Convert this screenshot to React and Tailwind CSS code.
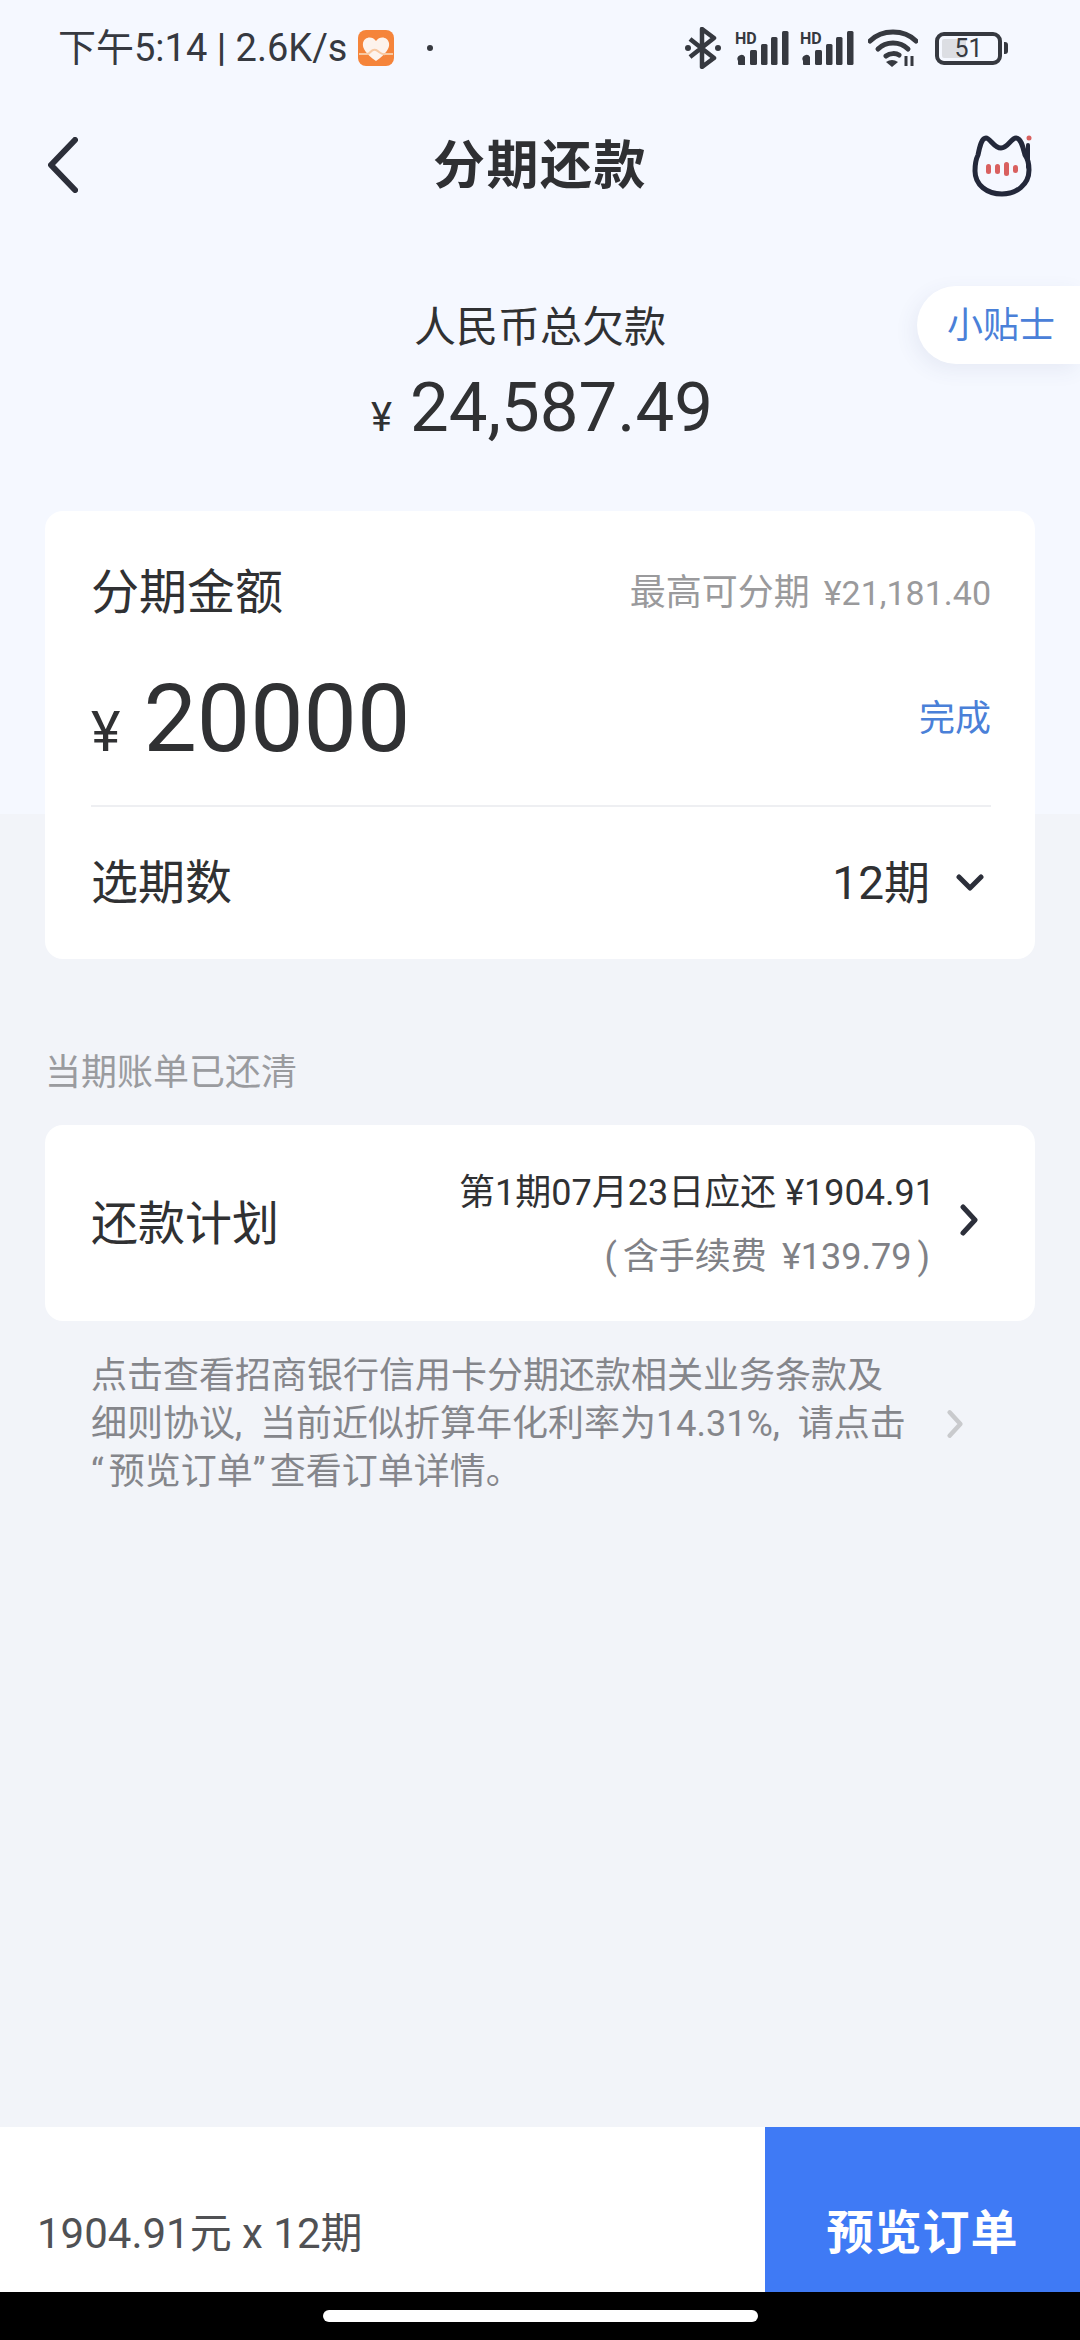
/**
 * App.jsx
 *
 * Installment repayment page for a credit card bill.
 */

import React from 'react';

const FONT = "font-['Roboto','Noto_Sans_CJK_SC',sans-serif]";

const Chevron = ({ className, color = '#2c2f3a', width = 5 }) => (
  <svg viewBox="0 0 20 32" className={className} fill="none">
    <path d="M4 3 L16 16 L4 29" stroke={color} strokeWidth={width} strokeLinecap="round" strokeLinejoin="round" />
  </svg>
);

const Signal = () => (
  <div className="relative w-[54px] h-[34px]">
    <span className="absolute left-0 top-0 text-[16px] leading-none font-bold text-[#363940]">HD</span>
    <svg viewBox="0 0 54 34" className="w-[54px] h-[34px]" fill="#363940">
      <path d="M3 30 a4 4 0 0 1 7 -4 v8 h-6 a1 1 0 0 1 -1 -1z" />
      <rect x="15" y="19" width="7" height="15" rx="1.5" />
      <rect x="26" y="13" width="6.5" height="21" rx="1.5" />
      <rect x="36" y="6" width="6.5" height="28" rx="1.5" />
      <rect x="47" y="0" width="6.5" height="34" rx="1.5" />
    </svg>
  </div>
);

const StatusBar = () => (
  <div className="h-[96px] flex items-center justify-between pl-[58px] pr-[72px] text-[#363940]">
    <div className="flex items-center">
      <span className="text-[38px] leading-none">
        下午5:14 <span className="font-medium">|</span> 2.6K/s
      </span>
      <svg viewBox="0 0 36 36" className="w-[36px] h-[36px] ml-[11px]">
        <rect width="36" height="36" rx="8" fill="#f5843a" />
        <path d="M18 31 C8 24 4 18 5 13 C6 7 14 5 18 11 C22 5 30 7 31 13 C32 18 28 24 18 31Z" fill="#fdf3ec" />
        <path d="M1 24 H9 C13 24 13 18 18 20 C22 22 23 25 27 24 H35" fill="none" stroke="#f8c9a2" strokeWidth="2" />
      </svg>
      <span className="w-[6px] h-[6px] rounded-full bg-[#363940] ml-[33px]" />
    </div>
    <div className="flex items-center">
      <svg viewBox="0 0 38 42" className="w-[38px] h-[42px]" fill="none" stroke="#363940" strokeWidth="4.5" strokeLinejoin="round">
        <path d="M6 12 L30 31 L18 40 V2 L30 11 L6 30" />
        <circle cx="4" cy="21" r="3" fill="#363940" stroke="none" />
        <circle cx="34" cy="21" r="3" fill="#363940" stroke="none" />
      </svg>
      <div className="ml-[13px]"><Signal /></div>
      <div className="ml-[11px]"><Signal /></div>
      <svg viewBox="0 0 50 38" className="w-[50px] h-[38px] ml-[14px]" fill="none" stroke="#363940" strokeWidth="5" strokeLinecap="round">
        <path d="M2 12 C14 0 36 0 48 12" />
        <path d="M10 20 C18 12 32 12 40 20" />
        <path d="M18 27 C22 24 28 24 31 26" />
        <path d="M24 38 l-6 -5 q6 -4 12 0z" fill="#363940" stroke="none" />
        <path d="M38 37 V27 M44 37 V27" strokeWidth="3" strokeLinecap="butt" />
      </svg>
      <div className="ml-[17px] flex items-center">
        <div className="relative w-[67px] h-[33px] rounded-[9px] border-[4px] border-[#363940] flex items-center p-[3px]">
          <div className="w-[24px] h-full rounded-[2px] bg-[#dcdee3]" />
          <span className="absolute inset-0 flex items-center justify-center text-[25px] leading-none">51</span>
        </div>
        <div className="w-[4px] h-[12px] rounded-r-[3px] bg-[#363940] ml-[2px]" />
      </div>
    </div>
  </div>
);

const NavBar = () => (
  <div className="h-[138px] grid grid-cols-[1fr_auto_1fr] items-center pl-[48px] pr-[48px]">
    <svg viewBox="0 0 30 56" className="w-[30px] h-[56px]" fill="none">
      <path d="M27 3 L3 28 L27 53" stroke="#2c2f3a" strokeWidth="6" strokeLinecap="round" strokeLinejoin="round" />
    </svg>
    <h1 className="text-[52px] leading-none font-bold text-[#2f3033] tracking-[1.5px] mt-[4px]">分期还款</h1>
    <svg viewBox="0 0 60 62" className="w-[60px] h-[62px] justify-self-end mt-[2px]" fill="none">
      <path
        d="M6 20 C8 10 10 3 14 3 C18 3 22 13 29 13 C36 13 39 3 44 3 C49 3 51 12 53 20 C56 24 57 30 57 35 C57 50 44 59 30 59 C15 59 3 50 3 36 C3 29 4 24 6 20Z"
        stroke="#23283a"
        strokeWidth="5"
        strokeLinejoin="round"
      />
      <path d="M56 10 V32" stroke="#23283a" strokeWidth="4" strokeLinecap="round" />
      <rect x="14" y="29" width="5" height="10" rx="2.5" fill="#d9605f" />
      <rect x="23" y="29" width="5" height="10" rx="2.5" fill="#d9605f" />
      <rect x="32" y="27" width="5" height="14" rx="2.5" fill="#d9605f" />
      <rect x="41" y="30" width="5" height="8" rx="2.5" fill="#d9605f" />
      <circle cx="57" cy="3" r="2.5" fill="#d9605f" />
    </svg>
  </div>
);

const App = () => (
  <div className={`${FONT} relative w-[1080px] h-[2340px] flex flex-col overflow-hidden bg-[linear-gradient(#f5f8ff_814px,#f2f4f9_814px)]`}>
    <StatusBar />
    <NavBar />

    {/* total owed */}
    <div className="relative flex flex-col items-center pt-[70px]">
      <p className="text-[42px] leading-[48px] text-[#303133]">人民币总欠款</p>
      <p className="flex items-baseline mt-[21px] ml-[4px] leading-none text-[#303133]">
        <span className="text-[40px] mr-[18px]">¥</span>
        <span className="text-[69px]">24,587.49</span>
      </p>
      <div className="absolute right-0 top-[52px] w-[163px] h-[78px] rounded-l-[39px] bg-white shadow-[-4px_6px_20px_rgba(60,80,130,0.08)] flex items-center pl-[30px] pt-[2px] text-[36px] text-[#4a80d8]">
        小贴士
      </div>
    </div>

    {/* amount card */}
    <section className="mx-[45px] mt-[69px] h-[448px] rounded-[18px] bg-white pl-[46px] pr-[44px] flex flex-col">
      <div className="flex items-center justify-between h-[122px] pt-[42px]">
        <span className="text-[48px] text-[#303133]">分期金额</span>
        <span className="text-[36px] text-[#9a9a9c]">
          最高可分期<span className="text-[34px] ml-[14px]">¥21,181.40</span>
        </span>
      </div>
      <div className="flex items-center justify-between h-[174px] border-b-2 border-[#eeeff2]">
        <div className="flex items-baseline text-[#303133] mt-[6px]">
          <span className="text-[56px] mr-[23px]">¥</span>
          <span className="text-[95px] leading-none">20000</span>
        </div>
        <span className="text-[36px] text-[#4a80d8]">完成</span>
      </div>
      <div className="flex-1 flex items-center justify-between">
        <span className="text-[47px] text-[#303133]">选期数</span>
        <div className="flex items-center text-[#303133]">
          <span className="text-[46px]">12期</span>
          <svg viewBox="0 0 28 18" className="w-[28px] h-[18px] ml-[26px] mr-[7px]" fill="none">
            <path d="M3 3 L14 14 L25 3" stroke="#2c2f3a" strokeWidth="5" strokeLinecap="round" strokeLinejoin="round" />
          </svg>
        </div>
      </div>
    </section>

    <p className="mt-[89px] ml-[45px] text-[36px] leading-[50px] text-[#9a9b9f]">当期账单已还清</p>

    {/* repayment plan */}
    <section className="mx-[45px] mt-[27px] h-[196px] rounded-[18px] bg-white pl-[46px] pr-[56px] flex items-center justify-between">
      <span className="text-[47px] text-[#303133] mt-[2px]">还款计划</span>
      <div className="flex items-center">
        <div className="flex flex-col items-end mt-[4px]">
          <span className="text-[36px] leading-[50px] text-[#303133]">第1期07月23日应还 ¥1904.91</span>
          <span className="text-[36px] leading-[50px] mt-[14px] text-[#808186] pr-[5px]">
            (<span className="ml-[6px]">含手续费<span className="ml-[15px]">¥139.79</span></span>
            <span className="ml-[6px]">)</span>
          </span>
        </div>
        <Chevron className="w-[20px] h-[32px] ml-[24px] -mt-[6px]" />
      </div>
    </section>

    {/* agreement note */}
    <div className="flex items-center pl-[91px] pr-[116px] mt-[31px] justify-between">
      <p className="text-[36px] leading-[48px] text-[#85868b]">
        点击查看招商银行信用卡分期还款相关业务条款及
        <br />
        细则协议<span className="mr-[9px]">,</span> 当前近似折算年化利率为14.31%<span className="mr-[9px]">,</span> 请点击
        <br />
        <span className="tracking-[5px]">“</span>预览订单<span className="tracking-[4px]">”</span>查看订单详情。
      </p>
      <Chevron className="w-[18px] h-[30px]" color="#c9cacd" />
    </div>

    {/* bottom bar */}
    <div className="mt-auto h-[165px] flex bg-white">
      <div className="flex-1 flex items-center pl-[37px] pt-[48px] text-[42px] text-[#505154]">1904.91元 x 12期</div>
      <div className="w-[315px] flex items-center justify-center pt-[48px] text-[47px] font-bold text-white bg-[#3f7af5] tracking-[1px]">预览订单</div>
    </div>
    <div className="h-[48px] bg-black flex justify-center pt-[18px]">
      <div className="w-[435px] h-[12px] rounded-full bg-white" />
    </div>
  </div>
);

export default App;
